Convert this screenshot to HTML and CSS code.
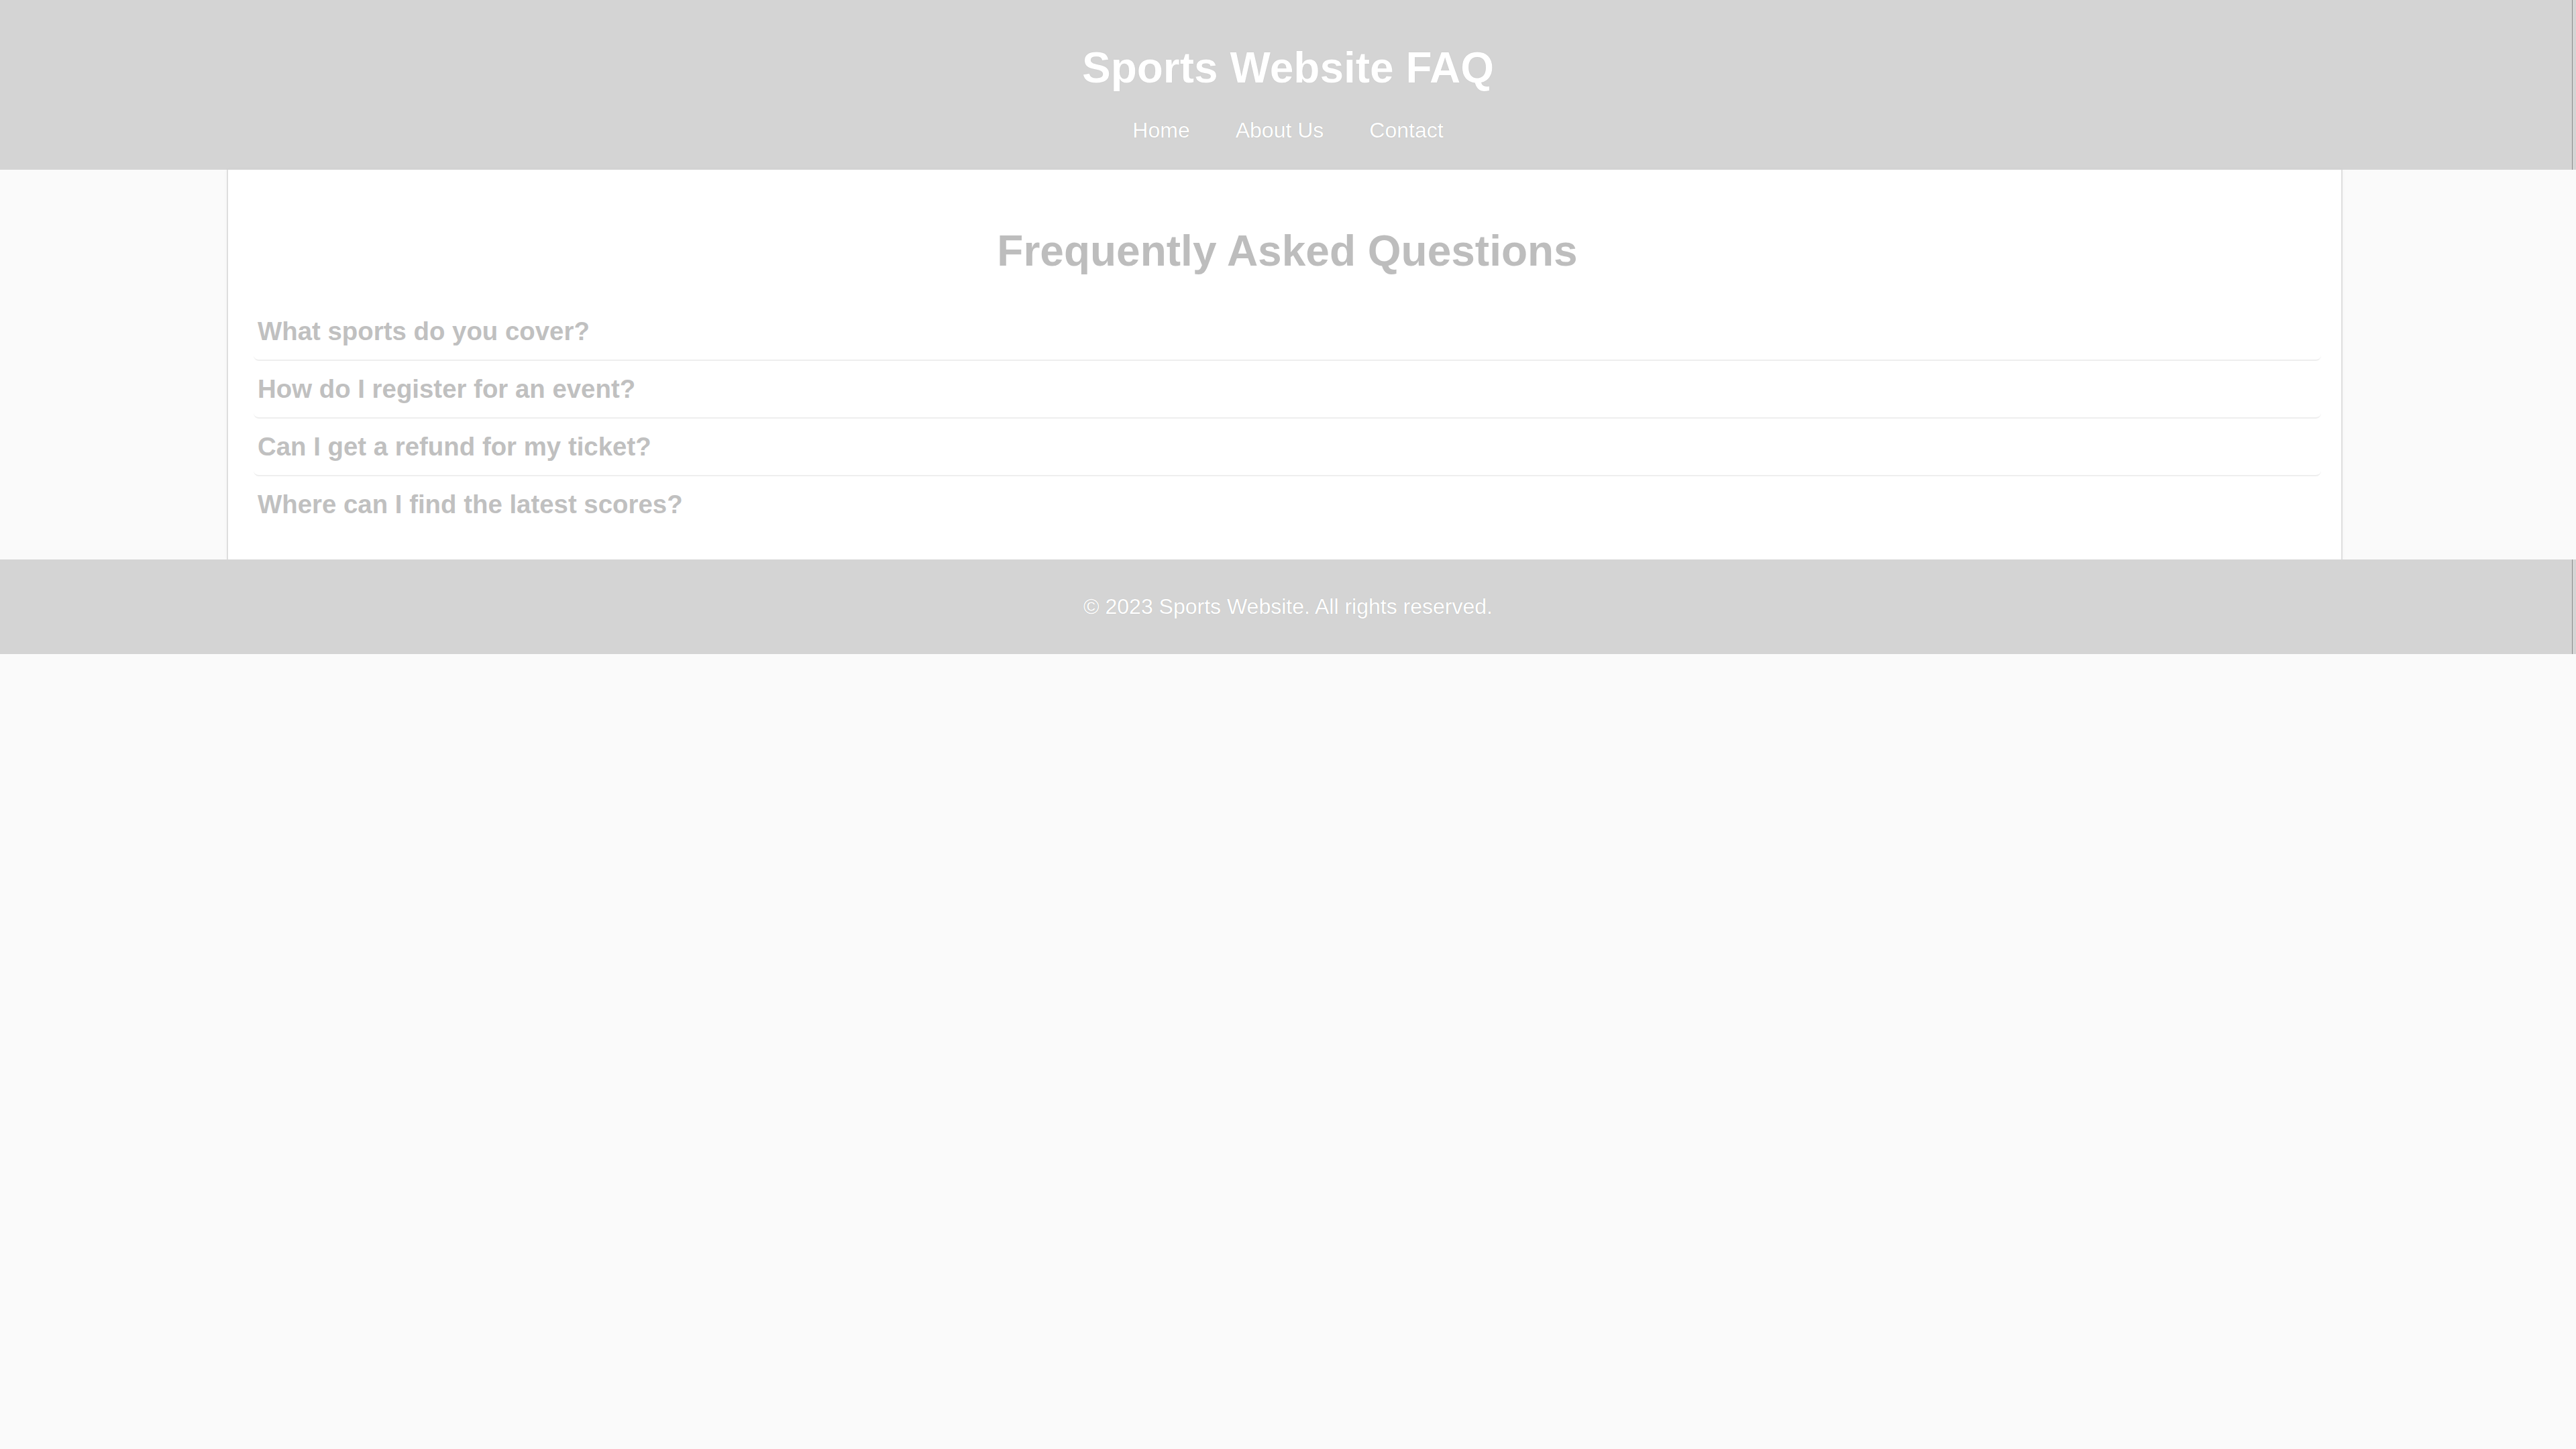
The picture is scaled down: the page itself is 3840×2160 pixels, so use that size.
FILE: index.html
```html
<!DOCTYPE html>
<html lang="en">
<head>
<meta charset="utf-8">
<title>Sports Website FAQ</title>
<link rel="stylesheet" href="styles.css">
</head>
<body>
<header class="site-header">
  <h1 class="site-title">Sports Website FAQ</h1>
  <nav class="site-nav">
    <a href="#" class="nav-link">Home</a>
    <a href="#" class="nav-link">About Us</a>
    <a href="#" class="nav-link">Contact</a>
  </nav>
</header>
<main class="faq-container">
  <h2 class="faq-heading">Frequently Asked Questions</h2>
  <div class="faq-item"><h3 class="faq-question">What sports do you cover?</h3></div>
  <div class="faq-item"><h3 class="faq-question">How do I register for an event?</h3></div>
  <div class="faq-item"><h3 class="faq-question">Can I get a refund for my ticket?</h3></div>
  <div class="faq-item faq-item-last"><h3 class="faq-question">Where can I find the latest scores?</h3></div>
</main>
<footer class="site-footer">
  <p class="footer-text">&copy; 2023 Sports Website. All rights reserved.</p>
</footer>
</body>
</html>
```

FILE: styles.css
```css
html, body {
  margin: 0;
  padding: 0;
}
body {
  background: #fafafa;
  font-family: "Liberation Sans", Arial, sans-serif;
  font-size: 32px;
  color: #c4c4c4;
}
.site-header {
  background-color: #d4d4d4;
  background-image: linear-gradient(to left, transparent 5px, #8c8c8c 5px, #8c8c8c 6px, transparent 6px);
  text-align: center;
  padding: 21px 0 18px;
  color: #ffffff;
}
.site-title {
  font-size: 64px;
  font-weight: bold;
  margin: 43px 0 38px;
  line-height: 74px;
  text-shadow: 0 0 1px rgba(0, 0, 0, 0.18);
}
.site-nav {
  height: 37px;
  line-height: 37px;
  padding-bottom: 22px;
  display: flex;
  justify-content: center;
  gap: 68px;
}
.nav-link {
  color: #ffffff;
  text-decoration: none;
  font-size: 32px;
  text-shadow: 0 0 1px rgba(0, 0, 0, 0.22);
}
.faq-container {
  width: 3070px;
  margin: 0 0 0 calc(50% - 1582px);
  padding: 84px 36px 40px 44px;
  background: #ffffff;
  border-left: 2px solid #dedede;
  border-right: 2px solid #dedede;
  box-shadow: 0 0 6px rgba(0, 0, 0, 0.03);
  box-sizing: content-box;
}
.faq-heading {
  text-align: center;
  font-size: 64px;
  line-height: 74px;
  margin: 0 0 41px;
  color: #bdbdbd;
  font-weight: bold;
}
.faq-item {
  margin: 0 -6px;
  padding: 20px 6px;
  border-bottom: 2px solid #eeeeee;
  border-radius: 0 0 8px 8px;
}
.faq-item-last {
  border-bottom: none;
  padding-bottom: 20px;
}
.faq-question {
  margin: 0;
  font-size: 38.4px;
  line-height: 44px;
  font-weight: bold;
  color: #c0c0c0;
}
.site-footer {
  background-color: #d4d4d4;
  background-image: linear-gradient(to left, transparent 5px, #8c8c8c 5px, #8c8c8c 6px, transparent 6px);
  text-align: center;
  padding: 20px 0;
  color: #ffffff;
}
.footer-text {
  margin: 32px 0;
  line-height: 37px;
  font-size: 32px;
  text-shadow: 0 0 1px rgba(0, 0, 0, 0.2);
}
```
